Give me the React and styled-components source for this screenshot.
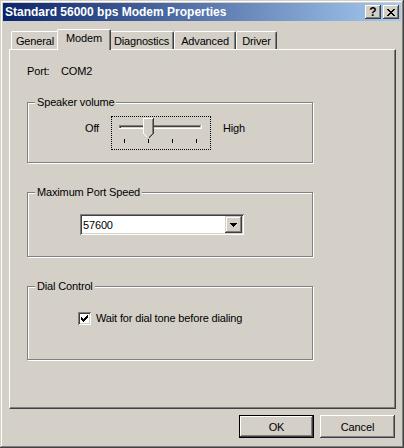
import React from 'react';
import styled, { createGlobalStyle } from 'styled-components';

const face = '#d4d0c8';

const GlobalStyle = createGlobalStyle`
  html, body {
    margin: 0;
    padding: 0;
    background: ${face};
  }
  body {
    font-family: "Liberation Sans", Arial, sans-serif;
    font-size: 11px;
    letter-spacing: -0.15px;
    color: #000;
  }
`;

const raised = `
  box-shadow: inset -1px -1px #404040, inset 1px 1px #fff,
    inset -2px -2px #808080, inset 2px 2px ${face};
`;

const sunken = `
  box-shadow: inset 1px 1px #808080, inset -1px -1px #fff,
    inset 2px 2px #404040, inset -2px -2px ${face};
`;

const Window = styled.div`
  width: 404px;
  height: 448px;
  box-sizing: border-box;
  padding: 3px;
  background: ${face};
  box-shadow: inset -1px -1px #404040, inset 1px 1px ${face},
    inset -2px -2px #808080, inset 2px 2px #fff;
  display: flex;
  flex-direction: column;
`;

const TitleBar = styled.div`
  height: 18px;
  display: flex;
  align-items: center;
  padding: 0 2px 0 2px;
  background: linear-gradient(to right, #0a246a, #a6caf0);
  color: #fff;
  font-weight: bold;
  font-size: 12px;
  letter-spacing: 0;
`;

const TitleText = styled.div`
  flex: 1;
  white-space: nowrap;
`;

const CaptionButton = styled.div`
  width: 16px;
  height: 14px;
  box-sizing: border-box;
  background: ${face};
  ${raised}
  margin-left: ${(p) => p.$gap || 0}px;
  display: flex;
  align-items: center;
  justify-content: center;
  color: #000;
  font-size: 12px;
  font-weight: bold;
  line-height: 14px;
`;

const Body = styled.div`
  flex: 1;
  display: flex;
  flex-direction: column;
  padding: 8px 5px 0 6px;
`;

const TabRow = styled.div`
  display: flex;
  align-items: flex-end;
  height: 20px;
  padding-left: 2px;
`;

const Tab = styled.div`
  position: relative;
  width: ${(p) => p.$w}px;
  height: ${(p) => (p.$active ? 21 : 18)}px;
  margin: ${(p) => (p.$active ? '0 -2px -1px -2px' : '0')};
  z-index: ${(p) => (p.$active ? 1 : 0)};
  box-sizing: border-box;
  background: ${face};
  border-top: 1px solid #fff;
  border-left: 1px solid #fff;
  border-right: 1px solid #404040;
  border-radius: 2px 2px 0 0;
  box-shadow: inset -1px 0 #808080;
  display: flex;
  justify-content: center;
  padding-top: ${(p) => (p.$active ? 2 : 3)}px;
  line-height: 13px;
`;

const Panel = styled.div`
  height: 360px;
  box-sizing: border-box;
  border-top: 1px solid #fff;
  border-left: 1px solid #fff;
  border-right: 1px solid #404040;
  border-bottom: 1px solid #404040;
  box-shadow: inset -1px -1px #808080;
  padding: 15px 0 0 17px;
  display: flex;
  flex-direction: column;
`;

const PortRow = styled.div`
  display: flex;
  height: 13px;
  line-height: 13px;
`;

const PortLabel = styled.span`
  width: 34px;
`;

const Group = styled.div`
  position: relative;
  width: 286px;
  height: ${(p) => p.$h}px;
  margin-top: ${(p) => p.$mt}px;
  box-sizing: border-box;
  border: 1px solid #808080;
  box-shadow: inset 1px 1px #fff, 1px 1px #fff;
  padding: ${(p) => p.$pt}px 0 0 ${(p) => p.$pl}px;
`;

const Legend = styled.span`
  position: absolute;
  left: 7px;
  top: -7px;
  padding: 0 2px;
  background: ${face};
  line-height: 13px;
`;

const SliderRow = styled.div`
  display: flex;
  align-items: flex-start;
  gap: 12px;
`;

const SideLabel = styled.span`
  margin-top: 6px;
  line-height: 13px;
`;

const FocusRect = styled.div`
  width: 100px;
  height: 34px;
  box-sizing: border-box;
  border: 1px dotted #000;
  display: flex;
`;

const Combo = styled.div`
  width: 164px;
  height: 21px;
  box-sizing: border-box;
  background: #fff;
  ${sunken}
  display: flex;
  align-items: center;
  justify-content: space-between;
  padding: 0 2px 0 3px;
`;

const ComboButton = styled.div`
  width: 17px;
  height: 17px;
  box-sizing: border-box;
  background: ${face};
  box-shadow: inset -1px -1px #404040, inset 1px 1px ${face},
    inset -2px -2px #808080, inset 2px 2px #fff;
  display: flex;
  align-items: center;
  justify-content: center;
`;

const CheckRow = styled.div`
  display: flex;
  align-items: center;
  gap: 5px;
  line-height: 13px;
`;

const CheckBox = styled.div`
  width: 13px;
  height: 13px;
  box-sizing: border-box;
  background: #fff;
  ${sunken}
  display: flex;
`;

const Footer = styled.div`
  display: flex;
  justify-content: flex-end;
  gap: 6px;
  margin-top: 6px;
  padding-right: 1px;
`;

const Button = styled.div`
  width: 75px;
  height: 23px;
  box-sizing: border-box;
  background: ${face};
  display: flex;
  align-items: center;
  justify-content: center;
  ${(p) =>
    p.$default
      ? `border: 1px solid #000; ${raised}`
      : raised}
`;

const Slider = () => (
  <svg width="98" height="32" viewBox="0 0 98 32" shapeRendering="crispEdges">
    <rect x="7" y="8" width="82" height="1" fill="#808080" />
    <rect x="7" y="8" width="1" height="3" fill="#808080" />
    <rect x="8" y="9" width="80" height="1" fill="#404040" />
    <rect x="8" y="9" width="1" height="2" fill="#404040" />
    <rect x="7" y="11" width="83" height="1" fill="#fff" />
    <rect x="89" y="8" width="1" height="4" fill="#fff" />
    <polygon points="31,1 42,1 42,17 37,22 36,22 31,17" fill={face} />
    <polyline points="31.5,16.5 31.5,1.5 41,1.5" fill="none" stroke="#fff" />
    <polyline points="41.5,1 41.5,16.5 36.5,21.5" fill="none" stroke="#404040" />
    <polyline points="40.5,2 40.5,16.5 36.5,20.5" fill="none" stroke="#808080" />
    <polyline points="31.5,16.5 35.5,20.5" fill="none" stroke="#fff" />
    {[12, 36, 60, 84].map((x) => (
      <rect key={x} x={x} y="22" width="1" height="4" fill="#000" />
    ))}
  </svg>
);

const checkPixels = [
  '......X',
  '.....XX',
  'X...XXX',
  'XX.XXX.',
  'XXXXX..',
  '.XXX...',
  '..X....',
];

const CheckMark = () => (
  <svg width="13" height="13" viewBox="0 0 13 13" shapeRendering="crispEdges">
    {checkPixels.map((row, y) =>
      row.split('').map((c, x) =>
        c === 'X' ? (
          <rect key={`${x}-${y}`} x={x + 3} y={y + 3} width="1" height="1" fill="#000" />
        ) : null
      )
    )}
  </svg>
);

const tabs = [
  { label: 'General', w: 48 },
  { label: 'Modem', w: 54, active: true },
  { label: 'Diagnostics', w: 65 },
  { label: 'Advanced', w: 62 },
  { label: 'Driver', w: 41 },
];

const App = () => {
  return (
    <Window>
      <GlobalStyle />
      <TitleBar>
        <TitleText>Standard 56000 bps Modem Properties</TitleText>
        <CaptionButton>?</CaptionButton>
        <CaptionButton $gap={2}>
          <svg width="8" height="7" viewBox="0 0 8 7" shapeRendering="crispEdges">
            <path
              d="M0 0h2v1h1v1h2v-1h1v-1h2v1h-1v1h-1v1h-1v1h1v1h1v1h1v1h-2v-1h-1v-1h-2v1h-1v1h-2v-1h1v-1h1v-1h1v-1h-1v-1h-1v-1h-1z"
              fill="#000"
            />
          </svg>
        </CaptionButton>
      </TitleBar>
      <Body>
        <TabRow>
          {tabs.map((t) => (
            <Tab key={t.label} $w={t.w} $active={t.active}>
              {t.label}
            </Tab>
          ))}
        </TabRow>
        <Panel>
          <PortRow>
            <PortLabel>Port:</PortLabel>
            <span>COM2</span>
          </PortRow>
          <Group $h={61} $mt={24} $pt={13} $pl={57}>
            <Legend>Speaker volume</Legend>
            <SliderRow>
              <SideLabel>Off</SideLabel>
              <FocusRect>
                <Slider />
              </FocusRect>
              <SideLabel>High</SideLabel>
            </SliderRow>
          </Group>
          <Group $h={65} $mt={29} $pt={21} $pl={52}>
            <Legend>Maximum Port Speed</Legend>
            <Combo>
              <span>57600</span>
              <ComboButton>
                <svg width="7" height="4" viewBox="0 0 7 4" shapeRendering="crispEdges">
                  <polygon points="0,0 7,0 3.5,4" fill="#000" />
                </svg>
              </ComboButton>
            </Combo>
          </Group>
          <Group $h={74} $mt={29} $pt={25} $pl={50}>
            <Legend>Dial Control</Legend>
            <CheckRow>
              <CheckBox>
                <CheckMark />
              </CheckBox>
              <span>Wait for dial tone before dialing</span>
            </CheckRow>
          </Group>
        </Panel>
        <Footer>
          <Button $default>OK</Button>
          <Button>Cancel</Button>
        </Footer>
      </Body>
    </Window>
  );
};

export default App;
